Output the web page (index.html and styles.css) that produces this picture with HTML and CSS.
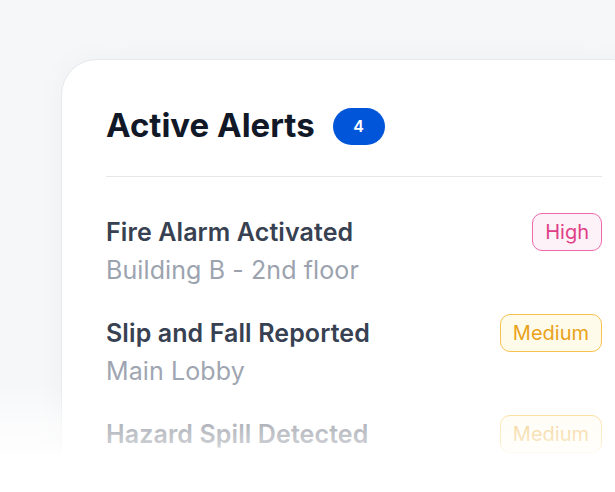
FILE: index.html
```html
<!DOCTYPE html>
<html lang="en">
<head>
<meta charset="utf-8">
<title>Active Alerts</title>
<link rel="stylesheet" href="styles.css">
</head>
<body>
<div class="stage">
  <section class="card">
    <header class="card-head">
      <h1 class="title">Active Alerts</h1>
      <span class="count">4</span>
    </header>
    <ul class="alerts">
      <li class="alert">
        <div class="alert-row">
          <span class="alert-name">Fire Alarm Activated</span>
          <span class="tag tag-high">High</span>
        </div>
        <div class="alert-place">Building B - 2nd floor</div>
      </li>
      <li class="alert">
        <div class="alert-row">
          <span class="alert-name">Slip and Fall Reported</span>
          <span class="tag tag-medium">Medium</span>
        </div>
        <div class="alert-place">Main Lobby</div>
      </li>
      <li class="alert">
        <div class="alert-row">
          <span class="alert-name">Hazard Spill Detected</span>
          <span class="tag tag-medium">Medium</span>
        </div>
      </li>
    </ul>
  </section>
</div>
<div class="fade"></div>
</body>
</html>
```

FILE: styles.css
```css
* { box-sizing: border-box; }
html, body {
  margin: 0;
  height: 492px;
  overflow: hidden;
}
body {
  background: #f6f7f9;
  font-family: Inter, "Noto Sans", sans-serif;
  position: relative;
}
.stage {
  padding: 59px 0 0 61px;
  height: 492px;
  overflow: hidden;
}
.card {
  width: 586px;
  background: #ffffff;
  border: 1px solid #e7e9ec;
  border-radius: 36px;
  padding: 45px 44px 45px 44px;
  box-shadow: 0 0 30px rgba(17, 24, 39, 0.035);
}
.card-head {
  display: flex;
  align-items: center;
  gap: 18px;
  padding-bottom: 31px;
  border-bottom: 1px solid #e5e7eb;
}
.title {
  margin: 0;
  font-size: 33px;
  line-height: 40px;
  font-weight: 700;
  color: #111827;
}
.count {
  display: inline-flex;
  align-items: center;
  justify-content: center;
  width: 52px;
  height: 37px;
  margin-top: 2px;
  border-radius: 999px;
  background: #0055d9;
  color: #ffffff;
  font-size: 16px;
  font-weight: 600;
}
.alerts {
  list-style: none;
  margin: 0;
  padding: 36px 0 0 0;
  display: flex;
  flex-direction: column;
  gap: 28px;
}
.alert-row {
  display: flex;
  align-items: center;
  justify-content: space-between;
}
.alert-name {
  font-size: 25px;
  line-height: 32px;
  font-weight: 600;
  color: #374151;
  letter-spacing: 0.1px;
}
.alert-place {
  margin-top: 3px;
  font-size: 25px;
  line-height: 32px;
  color: #9ca3af;
  letter-spacing: 0.1px;
}
.tag {
  display: inline-flex;
  align-items: center;
  height: 38px;
  padding: 0 12px;
  border-radius: 10px;
  border: 1px solid;
  font-size: 20px;
  font-weight: 400;
}
.tag-high {
  color: #df3f86;
  border-color: #f06aab;
  background: #fdf2f8;
}
.tag-medium {
  color: #e8a21a;
  border-color: #f7c24f;
  background: #fffbeb;
}
.fade {
  position: absolute;
  left: 0;
  right: 0;
  bottom: 0;
  height: 140px;
  background: linear-gradient(to bottom,
    rgba(255,255,255,0) 0%,
    rgba(255,255,255,0.05) 25%,
    rgba(255,255,255,0.62) 52%,
    rgba(255,255,255,0.74) 66%,
    #ffffff 74%,
    #ffffff 100%);
}
```
